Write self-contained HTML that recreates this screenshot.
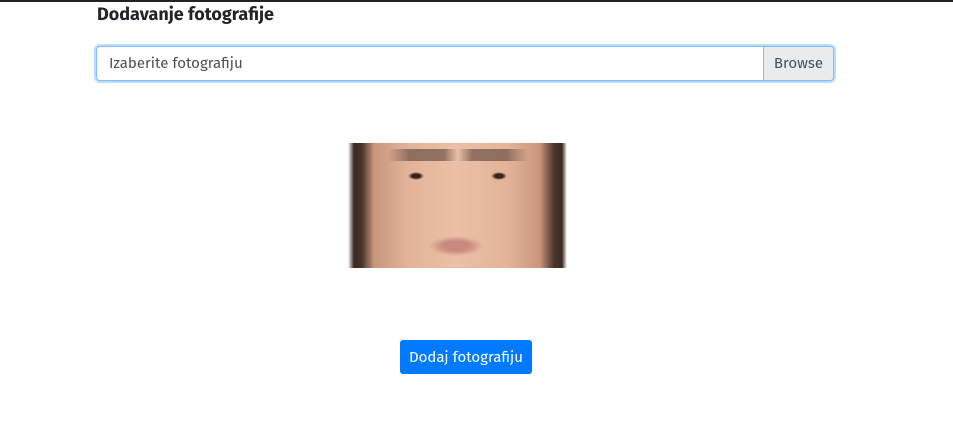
<!DOCTYPE html>
<html><head><meta charset="utf-8"><style>
html,body{margin:0;padding:0;background:#fff;width:953px;height:443px;overflow:hidden;font-family:"Fira Sans","Liberation Sans",sans-serif}
.top{position:absolute;left:0;top:0;width:953px;height:2px;background:#222}
h3{position:absolute;left:97px;top:3px;margin:0;font-size:18px;font-weight:bold;color:#212529}
.inp{position:absolute;left:96px;top:46px;width:736px;height:33px;border:1px solid #80bdff;border-radius:4px;box-shadow:0 0 0 2px #bcdcfd;background:#fff;overflow:hidden}
.inp .t{position:absolute;left:12px;top:7px;font-size:15px;color:#495057}
.inp .b{position:absolute;right:0;top:0;width:69px;height:33px;background:#e9ecef;border-left:1px solid #80bdff;font-size:15px;color:#495057;text-align:center;line-height:33px}
.img{position:absolute;left:348px;top:143px;width:219px;height:125px;
background:
radial-gradient(ellipse 8px 4px at 68px 33px,#3a2418 50%,transparent 100%),
radial-gradient(ellipse 8px 4px at 151px 33px,#3a2418 50%,transparent 100%),
radial-gradient(ellipse 27px 10px at 108px 103px,#c98a80 50%,transparent 100%),
linear-gradient(90deg,#fff 0,#3a2a22 6px,#4a342a 14px,#c9967c 26px,#e2b39a 60px,#ecc0a6 108px,#e2b39a 160px,#c9967c 192px,#4a342a 206px,#3a2a22 214px,#fff 219px);}
.img:before{content:"";position:absolute;left:40px;top:6px;width:140px;height:12px;background:linear-gradient(90deg,transparent 0,#5a4036 15%,#5a4036 40%,transparent 50%,#5a4036 60%,#5a4036 85%,transparent 100%);opacity:.6}
.btn{position:absolute;left:400px;top:340px;width:132px;height:34px;background:#007bff;border-radius:3px;color:#fff;font-size:15px;text-align:center;line-height:34px}
</style></head><body>
<div class="top"></div>
<h3>Dodavanje fotografije</h3>
<div class="inp"><span class="t">Izaberite fotografiju</span><span class="b">Browse</span></div>
<div class="img"></div>
<div class="btn">Dodaj fotografiju</div>
</body></html>
